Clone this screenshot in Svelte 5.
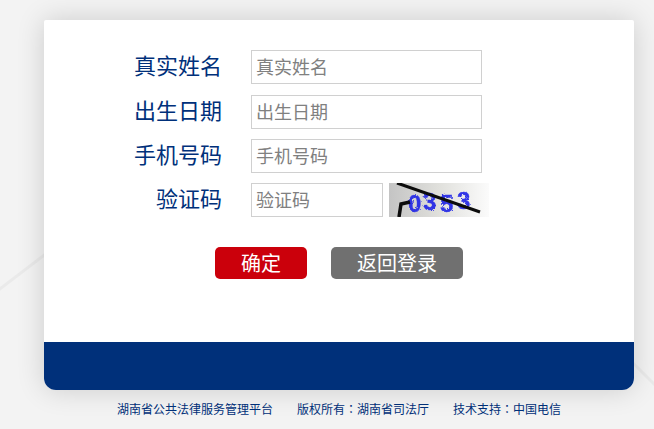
<script>
	const fields = [
		{ label: '真实姓名', name: 'realname' },
		{ label: '出生日期', name: 'birthday' },
		{ label: '手机号码', name: 'mobile' }
	]
</script>

<div class="page">
	<svg class="bg-lines" width="654" height="429" aria-hidden="true">
		<path d="M-4 292 L60 243" />
		<path d="M620 350 L660 390" />
	</svg>

	<div class="card">
		<form class="form" on:submit|preventDefault>
			{#each fields as f}
				<div class="row">
					<label for={f.name}>{f.label}</label>
					<input id={f.name} type="text" placeholder={f.label} />
				</div>
			{/each}
			<div class="row">
				<label for="code">验证码</label>
				<input id="code" class="short" type="text" placeholder="验证码" />
				<svg class="captcha" width="100" height="34" viewBox="0 0 100 34">
					<defs>
						<linearGradient id="cap" x1="0" x2="1" y1="0" y2="0">
							<stop offset="0" stop-color="#c4c4c4" />
							<stop offset="0.5" stop-color="#e0e0dc" />
							<stop offset="1" stop-color="#fbfbfb" />
						</linearGradient>
						<filter id="rough" x="-10%" y="-10%" width="120%" height="120%">
							<feTurbulence type="fractalNoise" baseFrequency="0.9" numOctaves="2" seed="4" />
							<feDisplacementMap in="SourceGraphic" scale="3" />
						</filter>
					</defs>
					<rect width="100" height="34" fill="url(#cap)" />
					<text x="19 34 51 68" y="29 27 29 26" class="digits" filter="url(#rough)">0353</text>
					<path d="M10 34 L12 21 L21 19" class="hook" />
					<path d="M8 0 L91 29" class="stroke" />
				</svg>
			</div>
			<div class="actions">
				<button type="submit" class="ok">确定</button>
				<button type="button" class="back">返回登录</button>
			</div>
		</form>
		<div class="band"></div>
	</div>

	<div class="footer">
		<span>湖南省公共法律服务管理平台</span>
		<span>版权所有<i>：</i>湖南省司法厅</span>
		<span>技术支持<i>：</i>中国电信</span>
	</div>
</div>

<style>
	:global(body) {
		background: #f3f3f3;
		overflow: hidden;
	}

	.page {
		position: relative;
		height: 429px;
		padding-top: 20px;
		box-sizing: border-box;
		font-family: "Noto Sans CJK SC", "Liberation Sans", sans-serif;
	}

	.bg-lines {
		position: absolute;
		left: 0;
		top: 0;
	}

	.bg-lines path {
		stroke: #eaeaea;
		stroke-width: 3;
		fill: none;
	}

	.card {
		position: relative;
		width: 590px;
		height: 370px;
		margin-left: 44px;
		display: flex;
		flex-direction: column;
		background: #fff;
		border-radius: 2px 2px 12px 12px;
		box-shadow: 0 0 28px rgba(0, 0, 0, 0.16);
		overflow: hidden;
	}

	.form {
		flex: 1;
		padding-top: 30px;
	}

	.row {
		display: flex;
		align-items: center;
		height: 34px;
		margin-bottom: 10px;
	}

	.row:first-child {
		margin-bottom: 11px;
	}

	label {
		width: 178px;
		height: 34px;
		margin-right: 29px;
		text-align: right;
		font-size: 22px;
		line-height: 29px;
		color: #00307a;
	}

	input {
		width: 231px;
		height: 34px;
		box-sizing: border-box;
		padding: 0 4px 2px;
		border: 1px solid #d0d0d0;
		background: #fff;
		font: inherit;
		font-size: 18px;
		color: #333;
		outline: none;
	}

	input::placeholder {
		color: #808080;
		opacity: 1;
	}

	input.short {
		width: 132px;
	}

	.captcha {
		display: block;
		margin-left: 6px;
	}

	.digits {
		font-family: "Liberation Sans", sans-serif;
		font-size: 24px;
		font-weight: 700;
		fill: #1f24e6;
		stroke: #1f24e6;
		stroke-width: 0.4;
		opacity: 0.9;
	}

	.stroke {
		stroke: #0c0c0c;
		stroke-width: 3;
		fill: none;
	}

	.hook {
		stroke: #0c0c0c;
		stroke-width: 3.5;
		fill: none;
	}

	.actions {
		display: flex;
		gap: 24px;
		margin: 30px 0 0 171px;
	}

	button {
		height: 32px;
		padding: 0;
		border: 0;
		border-radius: 5px;
		font: inherit;
		font-size: 20px;
		line-height: 32px;
		color: #fff;
	}

	.ok {
		width: 92px;
		background: #cb000b;
	}

	.back {
		width: 132px;
		background: #707070;
	}

	.band {
		height: 48px;
		background: #00307a;
	}

	.footer {
		display: flex;
		justify-content: center;
		gap: 24px;
		margin-top: 10px;
		padding-left: 24px;
		font-size: 12px;
		line-height: 17px;
		color: #00307a;
	}

	.footer i {
		font-family: "Noto Sans CJK TC", sans-serif;
		font-style: normal;
	}
</style>
